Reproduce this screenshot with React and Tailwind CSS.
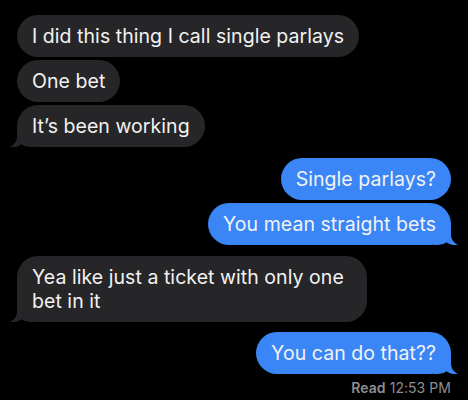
import React from 'react';

const Tail = ({ side, color }) => (
    <svg
        width="24"
        height="20"
        viewBox="0 0 24 20"
        className={side === 'left' ? 'absolute -left-[7px] bottom-0' : 'absolute -right-[7px] bottom-0 -scale-x-100'}
    >
        <path
            d="M7 0 V9 C7 14.5 4.5 17.5 0 20 C4.5 20.6 8.5 19.4 11.5 17.2 C14 19 17 20 22 20 H24 V0 Z"
            fill={color}
        />
    </svg>
);

const Bubble = ({ text, sent, tail }) => {
    const color = sent ? '#3a86f7' : '#262628';
    return (
        <div className={`flex ${sent ? 'justify-end' : 'justify-start'}`}>
            <div
                className={`relative max-w-[350px] rounded-[21px] px-[15px] py-[9px] text-[19.5px] leading-[24px] text-[#f2f2f2] ${sent ? 'bg-[#3a86f7]' : 'bg-[#262628]'}`}
            >
                {tail && <Tail side={sent ? 'right' : 'left'} color={color} />}
                <span className="relative">{text}</span>
            </div>
        </div>
    );
};

const App = () => {
    return (
        <div className="h-[400px] w-full overflow-hidden bg-black px-[17px] pt-[15px] font-['Inter',sans-serif] tracking-[0.05px]">
            {/* Incoming group */}
            <div className="flex flex-col gap-[3px]">
                <Bubble text="I did this thing I call single parlays" />
                <Bubble text="One bet" />
                <Bubble text="It’s been working" tail />
            </div>

            {/* Outgoing group */}
            <div className="mt-[11px] flex flex-col gap-[3px]">
                <Bubble text="Single parlays?" sent />
                <Bubble text="You mean straight bets" sent tail />
            </div>

            <div className="mt-[11px]">
                <Bubble text="Yea like just a ticket with only one bet in it" tail />
            </div>

            <div className="mt-[10px]">
                <Bubble text="You can do that??" sent tail />
            </div>

            <div className="mt-[6px] text-right text-[14px] leading-[16px] text-[#8e8e93]">
                <span className="font-semibold">Read</span> 12:53 PM
            </div>
        </div>
    );
};

export default App;
